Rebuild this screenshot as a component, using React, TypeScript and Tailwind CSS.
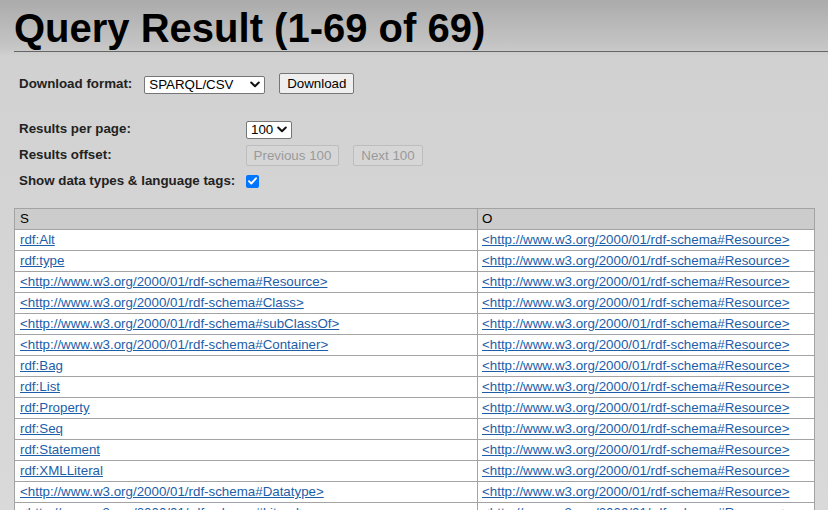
const RDFS = "http://www.w3.org/2000/01/rdf-schema#";

const uri = (name: string) => `<${RDFS}${name}>`;

const SUBJECTS = [
  "rdf:Alt",
  "rdf:type",
  uri("Resource"),
  uri("Class"),
  uri("subClassOf"),
  uri("Container"),
  "rdf:Bag",
  "rdf:List",
  "rdf:Property",
  "rdf:Seq",
  "rdf:Statement",
  "rdf:XMLLiteral",
  uri("Datatype"),
  uri("Literal"),
];

function Chevron() {
  return (
    <svg width="10" height="7" viewBox="0 0 10 7" fill="none" aria-hidden="true">
      <path d="M1.2 1.5L5 5.2l3.8-3.7" stroke="#111" strokeWidth="2" strokeLinecap="round" strokeLinejoin="round" />
    </svg>
  );
}

function FakeSelect({ value, width }: { value: string; width: string }) {
  return (
    <div className={`relative h-[18px] ${width}`}>
      <select
        defaultValue={value}
        className="h-full w-full appearance-none rounded-[2px] border border-[#767676] bg-white pl-[4px] text-[13.33px] leading-[16px] text-black outline-none"
      >
        <option>{value}</option>
      </select>
      <span className="pointer-events-none absolute right-[5px] top-[6px]">
        <Chevron />
      </span>
    </div>
  );
}

export default function App() {
  return (
    <div className="h-[510px] w-full overflow-hidden bg-[linear-gradient(#ababab,#c6c6c6_48px,#d1d1d1_56px,#d4d4d4_200px,#d9d9d9)] font-['Liberation_Sans',Arial,sans-serif] text-[13.33px] text-[#222]">
      <h1 className="ml-[14px] border-b border-[#666] pt-[5px] text-[40px] font-bold leading-[46px] text-black">
        Query Result (1-69 of 69)
      </h1>

      <div className="pl-[19px]">
        <div className="mt-[21px] flex h-[21px] items-center">
          <span className="font-bold">Download format:</span>
          <div className="ml-[12px]">
            <FakeSelect value="SPARQL/CSV" width="w-[121px]" />
          </div>
          <button className="ml-[14px] h-[21px] w-[75px] rounded-[2px] border border-[#767676] bg-[#efefef] text-[13.33px] text-black">
            Download
          </button>
        </div>

        <div className="mt-[21px] grid grid-cols-[227px_1fr] grid-rows-[27px_26px_26px] items-center">
          <span className="font-bold">Results per page:</span>
          <FakeSelect value="100" width="w-[46px]" />

          <span className="font-bold">Results offset:</span>
          <div className="flex gap-[14px]">
            <button disabled className="h-[21px] w-[93px] rounded-[2px] border border-[#bdbdbd] bg-[#d6d6d6] text-[13.33px] text-[#9a9a9a]">
              Previous 100
            </button>
            <button disabled className="h-[21px] w-[70px] rounded-[2px] border border-[#bdbdbd] bg-[#d6d6d6] text-[13.33px] text-[#9a9a9a]">
              Next 100
            </button>
          </div>

          <span className="font-bold">Show data types &amp; language tags:</span>
          <span className="flex h-[13px] w-[13px] items-center justify-center rounded-[2px] bg-[#0075ff]">
            <svg width="9" height="8" viewBox="0 0 9 8" fill="none" aria-hidden="true">
              <path d="M1 4.2l2.3 2.3L8 1.3" stroke="#fff" strokeWidth="1.9" strokeLinecap="round" strokeLinejoin="round" />
            </svg>
          </span>
        </div>
      </div>

      <table className="ml-[14px] mt-[14px] w-[801px] table-fixed border-collapse bg-white">
        <thead>
          <tr className="bg-[#cccccc]">
            <th className="h-[21px] w-[463px] border border-[#a3a3a3] px-[5px] py-0 text-left font-normal text-black">S</th>
            <th className="h-[21px] border border-[#a3a3a3] px-[4px] py-0 text-left font-normal text-black">O</th>
          </tr>
        </thead>
        <tbody>
          {SUBJECTS.map((subject, i) => (
            <tr key={i}>
              <td className="h-[21px] border border-[#a3a3a3] px-[5px] py-0">
                <a href="#" className="text-[#1d5ea8] underline">
                  {subject}
                </a>
              </td>
              <td className="h-[21px] border border-[#a3a3a3] px-[4px] py-0">
                <a href="#" className="text-[#1d5ea8] underline">
                  {uri("Resource")}
                </a>
              </td>
            </tr>
          ))}
        </tbody>
      </table>
    </div>
  );
}
